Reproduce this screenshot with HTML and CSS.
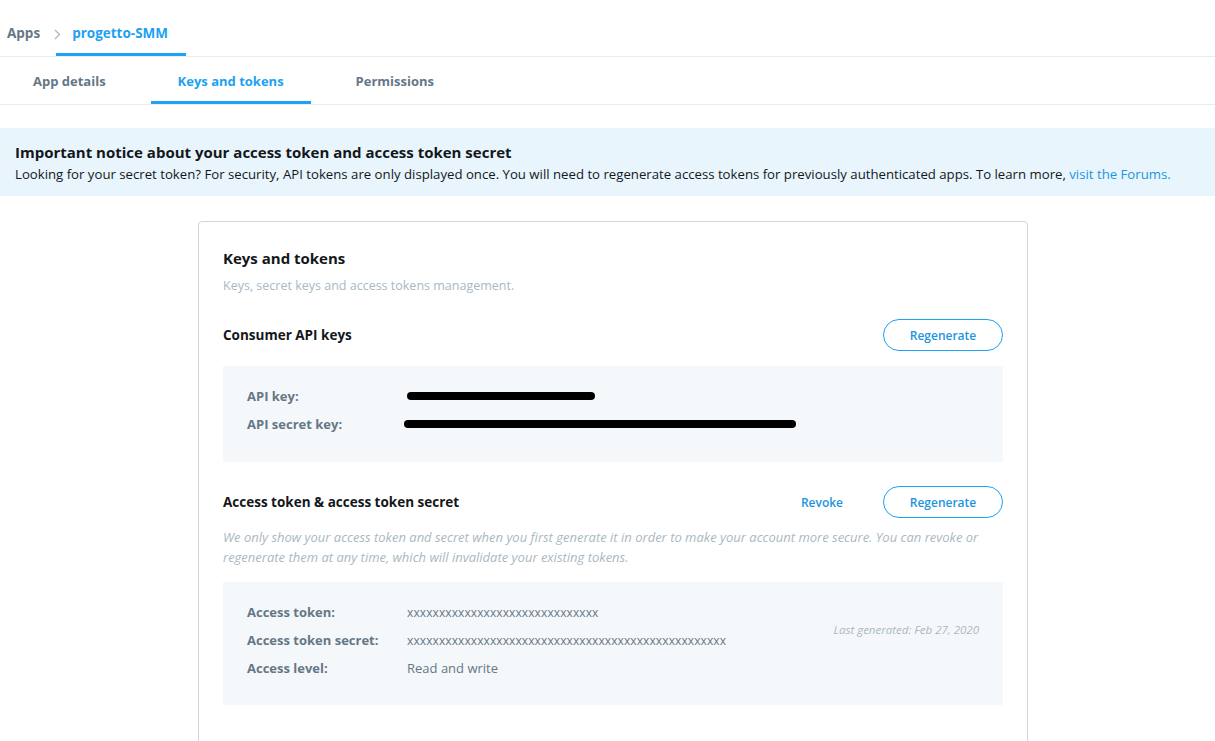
FILE: index.html
```html
<!DOCTYPE html>
<html lang="en">
<head>
<meta charset="utf-8">
<title>progetto-SMM - Keys and tokens</title>
<link rel="stylesheet" href="styles.css">
</head>
<body>
<header class="crumbs">
  <a class="crumb" href="#">Apps</a>
  <svg class="chev" width="7" height="11" viewBox="0 0 7 11"><path d="M1 1l4.5 4.5L1 10" fill="none" stroke="#aab8c2" stroke-width="1.3"/></svg>
  <a class="crumb crumb-active" href="#">progetto-SMM</a>
</header>
<nav class="tabs">
  <a class="tab" href="#">App details</a>
  <a class="tab tab-active" href="#">Keys and tokens</a>
  <a class="tab" href="#">Permissions</a>
</nav>
<section class="notice">
  <h2 class="notice-title">Important notice about your access token and access token secret</h2>
  <p class="notice-text">Looking for your secret token? For security, API tokens are only displayed once. You will need to regenerate access tokens for previously authenticated apps. To learn more, <a href="#" class="link">visit the Forums.</a></p>
</section>
<main class="wrap">
  <div class="card">
    <h1 class="card-title">Keys and tokens</h1>
    <p class="card-sub">Keys, secret keys and access tokens management.</p>

    <div class="sec-head sec-head-first">
      <h3 class="sec-title">Consumer API keys</h3>
      <div class="actions">
        <button class="btn">Regenerate</button>
      </div>
    </div>
    <div class="panel panel-keys">
      <div class="row"><span class="lbl">API key:</span><span class="val"><span class="redact redact-short"></span></span></div>
      <div class="row"><span class="lbl">API secret key:</span><span class="val"><span class="redact redact-long"></span></span></div>
    </div>

    <div class="sec-head">
      <h3 class="sec-title">Access token &amp; access token secret</h3>
      <div class="actions">
        <a class="revoke" href="#">Revoke</a>
        <button class="btn">Regenerate</button>
      </div>
    </div>
    <p class="hint">We only show your access token and secret when you first generate it in order to make your account more secure. You can revoke or regenerate them at any time, which will invalidate your existing tokens.</p>
    <div class="panel panel-tokens">
      <div class="rows">
        <div class="row"><span class="lbl">Access token:</span><span class="val val-x">xxxxxxxxxxxxxxxxxxxxxxxxxxxxxx</span></div>
        <div class="row"><span class="lbl">Access token secret:</span><span class="val val-x">xxxxxxxxxxxxxxxxxxxxxxxxxxxxxxxxxxxxxxxxxxxxxxxxxx</span></div>
        <div class="row"><span class="lbl">Access level:</span><span class="val">Read and write</span></div>
      </div>
      <span class="last">Last generated: Feb 27, 2020</span>
    </div>
  </div>
</main>
</body>
</html>
```
FILE: styles.css
```css
* { box-sizing: border-box; }
html, body { margin: 0; padding: 0; }
body {
  font-family: "Open Sans", "Noto Sans", sans-serif;
  color: #14171a;
  background: #fff;
  overflow: hidden;
}
a { text-decoration: none; }
h1, h2, h3, p { margin: 0; }

.crumbs {
  display: flex;
  align-items: stretch;
  height: 57px;
  border-bottom: 1px solid #e6ecf0;
  padding-left: 7px;
}
.crumb {
  display: flex;
  align-items: center;
  padding-top: 12px;
  font-size: 13.5px;
  font-weight: 700;
  color: #657786;
  border-bottom: 3px solid transparent;
}
.chev { align-self: center; margin: 12px 0 0 14px; }
.crumb-active {
  color: #1da1f2;
  padding: 12px 18px 0 16px;
  margin-left: -5px;
  border-bottom-color: #1da1f2;
}

.tabs {
  display: flex;
  gap: 18px;
  height: 48px;
  padding-left: 6px;
  border-bottom: 1px solid #e6ecf0;
}
.tab {
  display: flex;
  align-items: center;
  padding: 4px 27px 0;
  font-size: 13px;
  font-weight: 700;
  color: #657786;
  border-bottom: 3px solid transparent;
}
.tab-active {
  color: #1da1f2;
  border-bottom-color: #1da1f2;
}

.notice {
  margin-top: 23px;
  background: #e8f5fd;
  padding: 13px 15px 12px;
  height: 68px;
}
.notice-title {
  font-size: 15px;
  font-weight: 700;
  line-height: 22px;
  color: #14171a;
}
.notice-text {
  font-size: 13.2px;
  line-height: 23px;
  color: #14171a;
}
.link { color: #1b95e0; }

.wrap {
  display: flex;
  justify-content: center;
  padding-top: 25px;
  padding-left: 11px;
}
.card {
  width: 830px;
  min-height: 560px;
  border: 1px solid #ccd6dd;
  border-radius: 4px;
  padding: 25px 24px 24px;
}
.card-title {
  font-size: 15px;
  font-weight: 700;
  line-height: 22px;
  color: #14171a;
}
.card-sub {
  margin-top: 8px;
  font-size: 12.5px;
  line-height: 18px;
  color: #aab8c2;
}

.sec-head {
  display: flex;
  align-items: center;
  justify-content: space-between;
  margin-top: 24px;
}
.sec-head-first { margin-top: 24px; }
.sec-title {
  font-size: 13.5px;
  font-weight: 700;
  color: #14171a;
}
.actions {
  display: flex;
  align-items: center;
  gap: 40px;
}
.btn {
  width: 120px;
  height: 32px;
  border: 1px solid #1da1f2;
  border-radius: 16px;
  background: #fff;
  color: #1b95e0;
  font-family: inherit;
  font-size: 12px;
  font-weight: 600;
  cursor: pointer;
}
.revoke {
  font-size: 12px;
  font-weight: 600;
  color: #1b95e0;
}

.panel {
  background: #f5f8fa;
  margin-top: 15px;
  padding: 20px 24px;
}
.panel-keys { height: 96px; padding-top: 16px; }
.panel-tokens {
  display: flex;
  justify-content: space-between;
  align-items: flex-start;
  height: 123px;
  margin-top: 15px;
  padding-top: 16px;
  padding-bottom: 23px;
}
.row {
  display: flex;
  align-items: center;
  height: 28px;
}
.lbl {
  width: 160px;
  flex: none;
  font-size: 13px;
  font-weight: 700;
  color: #657786;
}
.val {
  font-size: 13px;
  color: #657786;
}
.val-x {
  font-size: 12px;
  letter-spacing: 0.1px;
}
.redact {
  display: block;
  height: 8px;
  background: #000;
  border-radius: 4px;
}
.redact-short { width: 188px; }
.redact-long { width: 392px; margin-left: -3px; }
.last {
  margin-top: 24px;
  font-size: 11.5px;
  font-style: italic;
  color: #aab8c2;
}

.hint {
  margin-top: 9px;
  font-size: 13px;
  font-style: italic;
  line-height: 20px;
  color: #aab8c2;
}
```
